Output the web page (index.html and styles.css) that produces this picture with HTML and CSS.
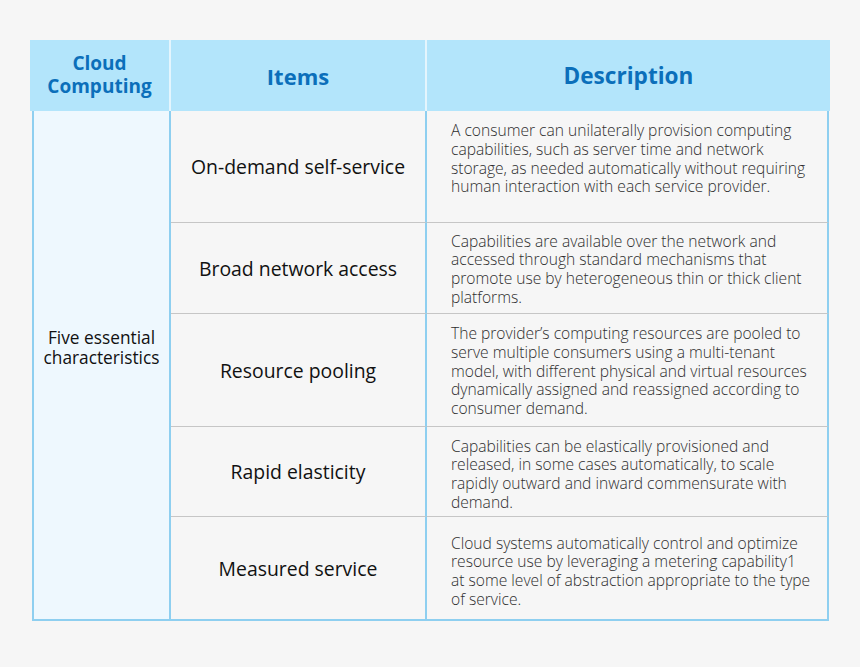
FILE: index.html
```html
<!DOCTYPE html>
<html lang="en">
<head>
<meta charset="utf-8">
<link rel="stylesheet" href="styles.css">
</head>
<body>
<div class="sheet">
  <div class="head h-cloud">Cloud<br>Computing</div>
  <div class="head h-items">Items</div>
  <div class="head h-desc">Description</div>

  <div class="group">Five essential<br>characteristics</div>

  <div class="item r1">On-demand self-service</div>
  <div class="desc r1 first">A consumer can unilaterally provision computing capabilities, such as server time and network storage, as needed automatically without requiring human interaction with each service provider.</div>

  <div class="item r2">Broad network access</div>
  <div class="desc r2">Capabilities are available over the network and accessed through standard mechanisms that promote use by heterogeneous thin or thick client platforms.</div>

  <div class="item r3">Resource pooling</div>
  <div class="desc r3">The provider’s computing resources are pooled to serve multiple consumers using a multi-tenant model, with different physical and virtual resources dynamically assigned and reassigned according to consumer demand.</div>

  <div class="item r4">Rapid elasticity</div>
  <div class="desc r4">Capabilities can be elastically provisioned and released, in some cases automatically, to scale rapidly outward and inward commensurate with demand.</div>

  <div class="item r5 last">Measured service</div>
  <div class="desc r5 last"><p>Cloud systems automatically control and optimize resource use by leveraging a metering capability1<br>at some level of abstraction appropriate to the type of service.</p></div>
</div>
</body>
</html>
```

FILE: styles.css
```css
html, body {
  margin: 0;
  padding: 0;
  background: #f6f6f6;
}

body {
  font-family: "Open Sans", "Noto Sans", sans-serif;
  width: 860px;
  height: 667px;
  overflow: hidden;
}

.sheet {
  margin: 40px 0 0 30px;
  width: 800px;
  display: grid;
  grid-template-columns: 141px 256px 403px;
  grid-template-rows: 71px 112px 91px 113px 90px 104px;
}

.head {
  background: #b3e5fb;
  color: #0b6fba;
  font-weight: 700;
  display: flex;
  align-items: center;
  justify-content: center;
  text-align: center;
}

.h-cloud {
  font-size: 19px;
  line-height: 23px;
  border-right: 2px solid #e4f5fd;
  padding-bottom: 2px;
}

.h-items {
  font-size: 22px;
  border-right: 2px solid #e4f5fd;
}

.h-desc {
  font-size: 22.6px;
}

.group {
  grid-column: 1;
  grid-row: 2 / span 5;
  background: #eef8fe;
  border-left: 2px solid #8ecff0;
  border-right: 2px solid #8ecff0;
  border-bottom: 2px solid #8ecff0;
  margin-left: 2px;
  display: flex;
  align-items: center;
  justify-content: center;
  text-align: center;
  font-size: 17.3px;
  line-height: 20px;
  color: #111;
  padding-bottom: 34px;
}

.item {
  grid-column: 2;
  border-right: 2px solid #8ecff0;
  border-bottom: 1px solid #c6c6c6;
  display: flex;
  align-items: center;
  justify-content: center;
  font-size: 19.4px;
  color: #111;
}

.desc {
  grid-column: 3;
  border-right: 2px solid #8ecff0;
  border-bottom: 1px solid #c6c6c6;
  margin-right: 1px;
  display: flex;
  align-items: center;
  padding: 2px 8px 0 24px;
  font-size: 15.6px;
  font-weight: 300;
  line-height: 18.7px;
  color: #2e2e2e;
}

.desc p {
  margin: 0;
}

.desc.first {
  padding-bottom: 18px;
}

.desc.r4 {
  padding-top: 5px;
}

.desc.r5 {
  padding-top: 6px;
}

.item.last,
.desc.last {
  border-bottom: 2px solid #8ecff0;
}

.r1 { grid-row: 2; }
.r2 { grid-row: 3; }
.r3 { grid-row: 4; }
.r4 { grid-row: 5; }
.r5 { grid-row: 6; }
```
